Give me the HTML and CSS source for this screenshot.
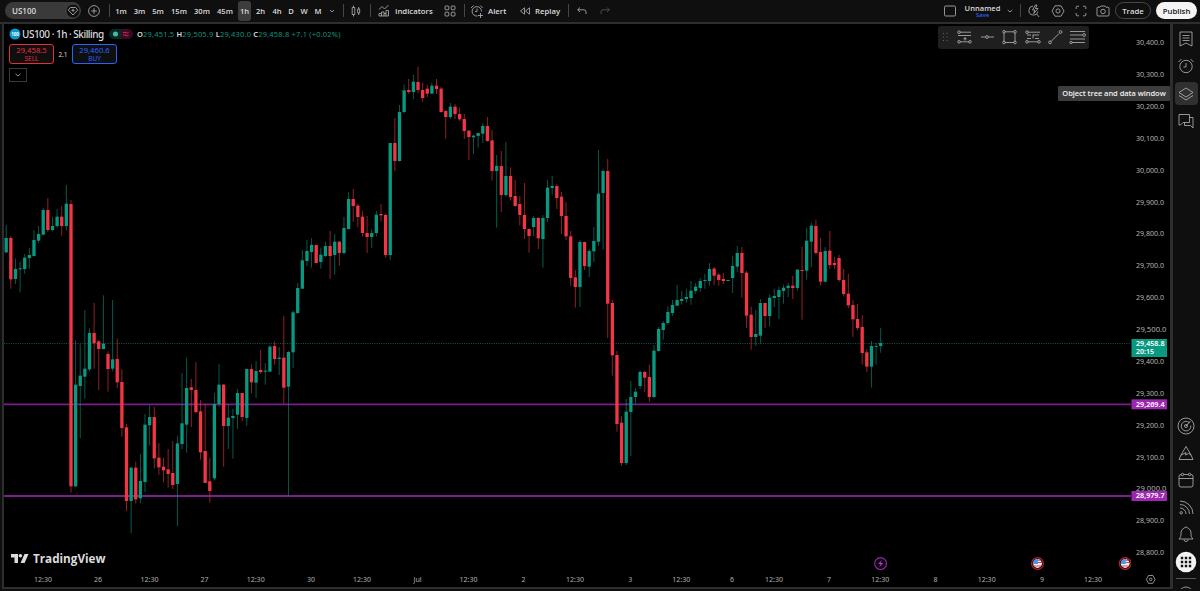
FILE: index.html
```html
<!DOCTYPE html>
<html lang="en">
<head>
<meta charset="utf-8">
<title>US100 chart</title>
<link rel="stylesheet" href="styles.css">
</head>
<body>
<header class="topbar">
  <div class="symbol"><span>US100</span><svg class="ic" width="16" height="16" viewBox="0 0 16 16"><circle cx="8" cy="8" r="7" fill="#111" stroke="#555" stroke-width=".6"/><path d="M5.3 4.5h5.4l2 2.6L8 12 3.3 7.100z"/><path d="M8 5.800v3M6.500 7.300h3"/></svg></div>
  <div class="cell w28"><svg class="ic" width="14" height="14" viewBox="0 0 14 14"><circle cx="7" cy="7" r="5.400"/><path d="M7 4.200v5.600M4.200 7h5.600"/></svg></div>
  <div class="cell w2"><i class="sep"></i></div>
  <div class="cell w22">1m</div><div class="cell w15">3m</div><div class="cell w22">5m</div><div class="cell w20">15m</div><div class="cell w26">30m</div><div class="cell w20">45m</div>
  <div class="cell w19"><b class="active">1h</b></div>
  <div class="cell w13">2h</div><div class="cell w20">4h</div><div class="cell w8">D</div><div class="cell w18">W</div><div class="cell w10">M</div>
  <div class="cell w18"><svg class="ic" width="8" height="6" viewBox="0 0 8 6"><path d="M2 2l2 2 2-2"/></svg></div>
  <div class="cell w4"><i class="sep"></i></div>
  <div class="cell w22"><svg class="ic" width="12" height="14" viewBox="0 0 12 14"><path d="M2.200 3.500h2.600v7H2.200zM3.500 1.500v2M3.500 10.500v2M7.700 5h2v4h-2zM8.700 3v2M8.700 9v2"/></svg></div>
  <div class="cell w6"><i class="sep"></i></div>
  <div class="cell w22"><svg class="ic" width="12" height="13" viewBox="0 0 12 13"><path d="M1 12V9.500h2.500V8h2.500v1.500H8V6.500h2.500V12zM3.500 9.500V12M6 9.500V12M8 9.500V12M1 5.500l3-3 2.500 2.500 4-4"/></svg></div>
  <div class="cell w42 left">Indicators</div>
  <div class="cell w25"><svg class="ic" width="12" height="12" viewBox="0 0 12 12"><rect x="1" y="1" width="3.800" height="3.800" rx=".8"/><rect x="7.200" y="1" width="3.800" height="3.800" rx=".8"/><rect x="1" y="7.200" width="3.800" height="3.800" rx=".8"/><rect x="7.200" y="7.200" width="3.800" height="3.800" rx=".8"/></svg></div>
  <div class="cell w4"><i class="sep"></i></div>
  <div class="cell w22"><svg class="ic" width="14" height="14" viewBox="0 0 14 14"><path d="M11.500 7.500A4.700 4.700 0 1 0 7.500 12M7 4.500v3H5M1 4l2.500-2.500M10.200 1.500L12.700 4M10.500 9v5M8 11.500h5"/></svg></div>
  <div class="cell w28 left">Alert</div>
  <div class="cell w18"><svg class="ic" width="12" height="10" viewBox="0 0 12 10"><path d="M5.500 1.800v6.400L1.500 5zM10.500 1.800v6.400L6.500 5z"/></svg></div>
  <div class="cell w32 left replay">Replay</div>
  <div class="cell w4"><i class="sep"></i></div>
  <div class="cell w24"><svg class="ic" width="12" height="10" viewBox="0 0 12 10"><path d="M4 1.500L1.700 3.800 4 6M1.700 3.800H8a2 2 0 0 1 2 2V8"/></svg></div>
  <div class="cell w22"><svg class="ic dim" width="12" height="10" viewBox="0 0 12 10"><path d="M8 1.500l2.300 2.300L8 6M10.300 3.800H4a2 2 0 0 0-2 2V8"/></svg></div>

  <div class="cell w20 push"><svg class="ic" width="14" height="14" viewBox="0 0 14 14"><rect x="1.500" y="2" width="11" height="10" rx="1.200"/></svg></div>
  <div class="cell w44 layout"><span>Unnamed</span><small>Save</small></div>
  <div class="cell w12"><svg class="ic" width="8" height="6" viewBox="0 0 8 6"><path d="M1.700 2L4 4l2.300-2"/></svg></div>
  <div class="cell w8"><i class="sep"></i></div>
  <div class="cell w20"><svg class="ic" width="14" height="14" viewBox="0 0 14 14"><path d="M6 2a4.500 4.500 0 1 0 4.800 5.500M9.500 10l2.700 3M8.500 1L5.500 6h2.200L6.800 9.500 11 4.500H8.500L10 1z"/></svg></div>
  <div class="cell w27"><svg class="ic" width="14" height="14" viewBox="0 0 14 14"><path d="M4 1.800h6L13 7l-3 5.200H4L1 7z"/><circle cx="7" cy="7" r="2.100"/></svg></div>
  <div class="cell w20"><svg class="ic" width="12" height="12" viewBox="0 0 12 12"><path d="M1.200 4V2.200a1 1 0 0 1 1-1H4M8 1.200h1.800a1 1 0 0 1 1 1V4M10.800 8v1.800a1 1 0 0 1-1 1H8M4 10.800H2.200a1 1 0 0 1-1-1V8"/></svg></div>
  <div class="cell w24"><svg class="ic" width="14" height="12" viewBox="0 0 14 12"><path d="M1 3.200a1 1 0 0 1 1-1h2L5 1h4l1 1.200h2a1 1 0 0 1 1 1V10a1 1 0 0 1-1 1H2a1 1 0 0 1-1-1z"/><circle cx="7" cy="6.500" r="2.300"/></svg></div>
  <div class="pill trade">Trade</div>
  <div class="pill publish">Publish</div>
</header>
<main class="workspace">
  <section class="chart">
    <svg class="plot" id="plot" width="1166" height="563" viewBox="4 24 1166 563"></svg>
    <div class="legend">
      <div class="title"><svg width="12" height="12" viewBox="0 0 12 12"><circle cx="6" cy="6" r="5.500" fill="#0899cc"/><text x="6" y="8" class="badge">100</text></svg><span class="name">US100 · 1h · Skilling</span>
        <svg class="state" width="24" height="10" viewBox="0 0 24 10"><path d="M5 0h7v10H5A5 5 0 0 1 5 0z" fill="#062b26"/><path d="M12 0h7a5 5 0 0 1 0 10h-7z" fill="#3a0b20"/><circle cx="6.500" cy="5" r="2.500" fill="#42bda8"/><path d="M14 3.700q1.500-1 3 0t2.500 0M14 6.300q1.500-1 3 0t2.500 0" fill="none" stroke="#d02e68"/></svg>
        <span class="ohlc"><b>O</b>29,451.5 <b>H</b>29,505.9 <b>L</b>29,430.0 <b>C</b>29,458.8 +7.1 (+0.02%)</span></div>
      <div class="quotes"><div class="quote sell"><span>29,458.5</span><small>SELL</small></div><span class="spread">2.1</span><div class="quote buy"><span>29,460.6</span><small>BUY</small></div></div>
      <div class="fold"><svg class="ic" width="8" height="6" viewBox="0 0 8 6"><path d="M1.500 1.800L4 4l2.500-2.200"/></svg></div>
    </div>
    <div class="tools"><svg class="ic" width="151" height="22" viewBox="0 0 151 22">
      <path d="M5.500 7v9M9 7v9" stroke-dasharray="1 2.500" stroke="#777"/>
      <path d="M22 6.200h11M20 9.500h13M22 15.800h9M27 11v3.500M25.500 12.800h3"/><circle cx="21" cy="6.200" r="1.300"/><circle cx="21" cy="15.800" r="1.300"/><circle cx="32" cy="15.800" r="1.300"/>
      <path d="M43 11h4.500M50.500 11H56"/><circle cx="49" cy="11" r="1.400"/>
      <path d="M66 7v9M77 7v9M67 5.800h9M67 16.500h9"/><circle cx="66" cy="5.800" r="1.300"/><circle cx="77" cy="5.800" r="1.300"/><circle cx="66" cy="16.500" r="1.300"/><circle cx="77" cy="16.500" r="1.300"/>
      <path d="M90 6.200h12M89 9h4M97 12.500h4M89 12.500h4M90 15.800h10M95 8.500v4M95 9h6"/><circle cx="89" cy="6.200" r="1.300"/><circle cx="89" cy="15.800" r="1.300"/><circle cx="101" cy="15.800" r="1.300"/>
      <path d="M113 15.500l8-8"/><circle cx="112" cy="16.300" r="1.400"/><circle cx="122.500" cy="6" r="1.400"/>
      <path d="M132 5.500h15M132 9h12M132 13h15M134 16.500h13"/><circle cx="146" cy="9" r="1.400"/><circle cx="133" cy="16.500" r="1.200"/>
    </svg></div>
    <div class="tip">Object tree and data window</div>
  </section>
  <nav class="side">
    <div class="slot"><svg class="ic" width="18" height="18" viewBox="0 0 18 18"><path d="M3 2h12v14l-6-3-6 3zM5.500 5.500h7M5.500 8h7M5.500 10.500h7"/></svg></div>
    <div class="slot"><svg class="ic" width="18" height="18" viewBox="0 0 18 18"><circle cx="9" cy="9.500" r="6.200"/><path d="M9 6v4H6.500M1.500 5l3-3M13.500 2l3 3"/></svg></div>
    <div class="slot on"><svg class="ic" width="18" height="18" viewBox="0 0 18 18"><path d="M9 3l7 4.500L9 12 2 7.500zM2 10.500L9 15l7-4.500"/></svg></div>
    <div class="slot"><svg class="ic" width="18" height="18" viewBox="0 0 18 18"><path d="M2 2.500h10.500v8H6L3.500 13H2zM12.500 5.500H16V16l-2.500-2.500H7.500v-3"/></svg></div>
    <div class="slot lower"><svg class="ic" width="20" height="20" viewBox="0 0 20 20"><circle cx="10" cy="10" r="8"/><path d="M13.500 6.800A4.800 4.800 0 1 0 14.800 9.500M10 10l4.500-5"/><circle cx="10" cy="10" r="1.500"/></svg></div>
    <div class="slot"><svg class="ic" width="18" height="18" viewBox="0 0 18 18"><path d="M9 2.500L5.500 8.500 4 11l5-2.500-.5 2.500 3-1.500L14 11 9 2.500M4 11l-2 4.500h14L14 11M2 15.500"/></svg></div>
    <div class="slot"><svg class="ic" width="18" height="18" viewBox="0 0 18 18"><rect x="2" y="3.500" width="14" height="12.500" rx="2"/><path d="M2 7.500h14"/><circle cx="5.500" cy="3.500" r="1.200" fill="#0f0f0f"/><circle cx="12.500" cy="3.500" r="1.200" fill="#0f0f0f"/></svg></div>
    <div class="slot"><svg class="ic" width="18" height="18" viewBox="0 0 18 18"><path d="M3 3a13 13 0 0 1 13 13M3 6.500A9.500 9.500 0 0 1 12.500 16M3 10a6 6 0 0 1 6 6"/><circle cx="4.200" cy="14.800" r="1.200"/></svg></div>
    <div class="slot"><svg class="ic" width="18" height="18" viewBox="0 0 18 18"><path d="M2 14c2-2 2-3 2-6 0-3 2-4.500 3.500-5a1.600 1.600 0 0 1 3 0C12 3.500 14 5 14 8c0 3 0 4 2 6zM7 14.500a2 2 0 0 0 4 0"/></svg></div>
    <div class="slot apps"><svg width="22" height="22" viewBox="0 0 22 22"><circle cx="11" cy="11" r="10.300" fill="#f4f4f4"/><path fill="#111" d="M5.800 5.800h2.400v2.400H5.800zM9.800 5.800h2.400v2.400H9.800zM13.800 5.800h2.400v2.400h-2.400zM5.800 9.800h2.400v2.400H5.800zM9.800 9.800h2.400v2.400H9.800zM13.800 9.800h2.400v2.400h-2.400zM5.800 13.800h2.400v2.400H5.800zM9.800 13.800h2.400v2.400H9.800zM13.800 13.800h2.400v2.400h-2.400z"/></svg></div>
    <i class="rule"></i>
    <svg class="ic help" width="18" height="18" viewBox="0 0 18 18"><circle cx="9" cy="9" r="7"/><circle cx="9" cy="9" r="3.500"/></svg>
  </nav>
</main>
<script src="chart.js"></script>
</body>
</html>
```
FILE: styles.css
```css
* { box-sizing: border-box; }
body { margin: 0; width: 1200px; height: 591px; overflow: hidden; background: #0f0f0f; color: #dbdbdb; font-family: "Noto Sans", "Open Sans", sans-serif; font-size: 7.6px; display: flex; flex-direction: column; }
.ic { fill: none; stroke: #b8b8b8; stroke-width: .8; flex: none; }
.ic.dim { stroke: #5a5a5a; }
.topbar { height: 22px; padding: 0 3px 1px 5px; display: flex; align-items: center; flex: none; font-family: "Open Sans", "Noto Sans", sans-serif; font-weight: 600; white-space: nowrap; }
.symbol { width: 76px; height: 17px; border-radius: 9px; background: #3a3a3a; display: flex; align-items: center; justify-content: space-between; padding: 0 0 0 7px; margin-right: -1px; flex: none; font-size: 8px; }
.cell { display: flex; align-items: center; justify-content: center; flex: none; height: 21px; }
.cell.left { justify-content: flex-start; font-size: 7.8px; }
.cell.replay { padding-left: 1px; }
.sep { width: 1px; height: 13px; background: #464646; flex: none; }
.active { font-weight: 600; width: 13px; height: 20px; background: #3d3d3d; border-radius: 3px; display: flex; align-items: center; justify-content: center; flex: none; }
.w2 { width: 2px; } .w4 { width: 4px; } .w6 { width: 6px; } .w8 { width: 8px; } .w10 { width: 10px; } .w12 { width: 12px; } .w13 { width: 13px; } .w15 { width: 15px; } .w18 { width: 18px; } .w19 { width: 19px; } .w20 { width: 20px; } .w22 { width: 22px; } .w24 { width: 24px; } .w25 { width: 25px; } .w26 { width: 26px; } .w27 { width: 27px; } .w28 { width: 28px; } .w32 { width: 32px; } .w42 { width: 42px; } .w44 { width: 44px; }
.push { margin-left: auto; }
.layout { flex-direction: column; line-height: 8px; font-size: 7.5px; padding-left: 1px; }
.layout span { letter-spacing: .05px; }
.layout small { font-size: 6px; line-height: 6px; color: #2962ff; }
.pill { height: 17px; border-radius: 9px; display: flex; align-items: center; justify-content: center; flex: none; font-size: 7.8px; }
.trade { width: 36px; border: 1px solid #484848; margin-right: 5px; }
.publish { width: 41px; background: #f4f4f4; color: #111; }
.workspace { height: 567px; border-top: 2px solid #2e2e2e; display: flex; flex: none; }
.chart { position: relative; width: 1171px; height: 565px; border: solid #2e2e2e; border-width: 0 3px 2px 2px; margin-left: 2px; background: #000; flex: none; }
.plot { display: block; }
.plot text { font-size: 7.3px; fill: #b2b2b2; }
.plot .date { text-anchor: middle; font-size: 7px; }
.plot .tag { fill: #fff; font-weight: 600; }
.plot .brand { font: 700 12px "Open Sans", sans-serif; fill: #dcdcdc; }
.legend { position: absolute; left: 5px; top: 4px; display: flex; flex-direction: column; white-space: nowrap; }
.title { display: flex; align-items: center; height: 12px; }
.badge { font: bold 4.5px "Open Sans", sans-serif; fill: #fff; text-anchor: middle; }
.name { font-size: 10px; width: 82px; margin-left: 1px; letter-spacing: -.5px; font-weight: 500; }
.state { margin-left: 5px; }
.ohlc { margin-left: 4px; color: #0d9580; font-size: 7.5px; letter-spacing: .18px; }
.ohlc b { color: #dbdbdb; font-weight: 600; }
.quotes { display: flex; align-items: center; margin-top: 4px; height: 20px; }
.quote { width: 45px; height: 20px; border: 1px solid; border-radius: 3px; background: #0f0f0f; display: flex; flex-direction: column; align-items: center; justify-content: center; font-size: 7.700px; line-height: 9px; }
.quote small { font-size: 6.5px; line-height: 7px; }
.sell { color: #e32f3d; } .buy { color: #2962ff; }
.spread { width: 18px; text-align: center; font-size: 6.5px; }
.fold { width: 18px; height: 14px; border: 1px solid #3a3a3a; margin-top: 4px; display: flex; align-items: center; justify-content: center; }
.tools { position: absolute; left: 934px; top: 2px; width: 151px; height: 23px; background: #1f1f1f; border-radius: 3px; }
.tip { position: absolute; right: 0; top: 62px; width: 112px; height: 15px; line-height: 14px; background: #3d3d3d; color: #f0f0f0; text-align: center; white-space: nowrap; font-family: "Open Sans", sans-serif; font-weight: 600; font-size: 7.5px; letter-spacing: -.05px; border-radius: 1px; }
.side { width: 26px; display: flex; flex-direction: column; align-items: center; padding-top: 1px; overflow: hidden; }
.slot { width: 23px; height: 27px; display: flex; align-items: center; justify-content: center; flex: none; }
.slot.on { background: #303030; border-radius: 4px; height: 23px; margin: 3px 0 2px; }
.lower { margin-top: 278px; }
.apps { margin-top: 1px; }
.rule { width: 20px; height: 1px; background: #555; margin-top: 3px; flex: none; }
.help { margin-top: 6px; }
```
FILE: chart.js
```js
// Each block: vertical origin, then candles as direction, high, body top, body bottom, low
// in thirds of a pixel below that origin.
const blocks = [
[170, `G165,204,247,250 R198,204,328,356 G265,297,327,342 G274,295,298,367 G252,263,297,311 G233,255,264,296 G180,210,258,260 G168,192,212,220 G113,120,194,196 R84,120,180,186 G141,168,180,184 G117,140,168,174 R108,140,168,197 G45,101,168,182 R90,102,949,968 G511,644,949,951 G523,617,648,805 G420,596,620,686 G475,489,598,604 R399,489,520,596 R510,514,537,660 G376,521,537,538 R544,552,597,665 G390,568,596,604 R506,567,637,654 R598,636,774,800 R761,772,993,1023 G890,893,993,1090 R875,893,988,1001 G852,933,985,1000 G732,764,936,967 G706,741,766,827 R711,741,865,895 R819,863,892,914 R863,890,901,938 R837,898,912,953 R813,909,945,957 G797,820,942,1068 G609,760,822,837 G563,654,764,848 R627,652,660,771 R576,660,726,730 R690,724,847,869 R702,843,939,939 R863,934,963,998 G669,702,925,930 G583,644,702,710 R642,644,768,890 G702,743,768,837 G716,738,744,866 G657,669,734,777 R669,669,741,754 G595,597,744,768 R583,597,637,670 G573,603,638,684 R540,600,606,612 G579,602,605,644 G525,530,605,606 R514,528,567,584 G531,563,567,615 R438,563,653,701 G543,546,650,978 G420,427,547,594 G339,354,429,432 G240,271,356,357 G210,243,273,288 G204,225,246,293 R224,225,279,280 G233,254,276,296 G215,228,258,261 R183,228,258,327 G192,215,255,314 R213,215,249,287 G141,174,249,254 G66,87,177,178 R57,87,108,155 R101,107,141,172 R123,140,189,200 R138,189,201,249 G178,189,201,234 G123,134,189,200 R102,132,136,155 R130,135,255,263`],
[60, `G249,249,585,600 R174,249,303,333 G135,156,303,305 G74,91,156,160 R57,90,96,102 G44,65,96,117 R20,66,90,99 R68,90,114,125 R74,86,101,111 G68,77,101,102 R57,77,87,102 R80,86,156,158 R150,153,171,236 G129,140,171,177 R132,140,162,177 R143,162,178,183 R161,177,213,237 R210,212,231,300 G225,227,232,282 G218,219,228,263 G190,198,221,249 R171,198,243,245 R210,241,333,362 G285,318,333,503 R273,318,405,456 G246,348,405,410 R322,348,411,422 R360,408,438,441 R408,432,465,497 R369,465,507,537 R506,507,528,578 G468,474,501,528 R471,474,535,567 G465,474,537,623 G360,383,474,486 G348,378,384,404 R373,378,414,447 R396,410,468,522 R426,468,529,540`],
[140, `R273,289,414,437 R390,412,441,503 G300,306,441,501 R305,306,378,390 G327,333,380,412 G261,303,334,366 G30,161,305,318 G86,93,159,329 R57,93,491,594 R480,489,646,707 R633,645,852,875 R828,848,969,977 G777,815,969,975 G723,771,816,948 G744,755,771,791 G690,696,738,748 R692,696,713,756 R674,711,771,785 G615,632,771,774 G561,567,633,634 G543,549,570,599 G499,516,549,554 G480,495,519,527 G435,480,497,498 G453,477,483,494 G446,471,477,489 G423,452,474,494 G429,440,453,461 G414,423,444,456 G402,420,423,446 G369,387,423,437 R381,386,407,435 R399,404,420,437 R399,417,423,432 G420,420,423,423`],
[200, `G167,198,234,279 G138,159,200,216 R141,159,219,293 R213,218,347,384 R320,344,411,449 G330,402,411,438 G297,309,407,431 R308,309,348,384 G283,293,348,380 G266,288,294,321 G261,270,291,357 G254,263,273,311 G249,257,264,291 R228,257,264,297 G207,209,264,272 R141,210,213,359 G83,122,212,239 G68,77,125,201 R59,78,159,164 R113,156,245,257 G141,153,245,246 R93,152,195,207 R170,189,195,208 R165,174,240,246 R207,240,282,290 R222,281,316,324 R299,315,358,411 R312,357,384,390 R345,381,459,494 R447,457,500,516 G423,438,500,563 G429,438,440,494 G384,429,438,458`]
];
const color = { G: '#089981', R: '#f23645' };
const text = (x, y, s, cls = '', len = 0) =>
  `<text x="${x}" y="${y}" class="${cls}"${len ? ` textLength="${len}" lengthAdjust="spacingAndGlyphs"` : ''}>${s}</text>`;
let out = '';

// Price levels
for (const y of [404.300, 496]) out += `<path d="M4 ${y}H1131" stroke="#7b1d8c" stroke-width="1.800"/>`;
out += '<path d="M4 343.500H1131" stroke="#08735f" stroke-width=".8" stroke-dasharray="1 1.300"/>';

// Candles
let i = 0;
for (const [top, rows] of blocks) {
  for (const row of rows.split(' ')) {
    const c = color[row[0]];
    const [h, a, b, l] = row.slice(1).split(',').map(v => top + v / 3);
    const x = 6.2 + 4.627 * i++;
    out += `<path d="M${x} ${h}V${l}" stroke="${c}" stroke-width=".8" opacity=".75"/>` +
      `<rect x="${x - 1.650}" y="${a}" width="3.300" height="${Math.max(b - a, .8)}" fill="${c}"/>`;
  }
}

// Price scale
for (let k = 0; k <= 16; k++) {
  const p = (30400 - k * 100).toLocaleString('en-US') + '.0';
  out += text(1136, 45.200 + k * 31.870, p, '', k === 9 || k === 14 ? 30.500 : 28);
}
out += '<rect x="1131.500" y="339" width="35.500" height="18" fill="#089981"/>' +
  text(1136, 346.300, '29,458.8', 'tag', 28.500) + text(1136, 354.300, '20:15', 'tag', 18);
for (const [y, s] of [[399.300, '29,269.4'], [491, '28,979.7']])
  out += `<rect x="1131.500" y="${y}" width="35.500" height="10" fill="#9c27b0"/>` + text(1136, y + 7.400, s, 'tag', 28.500);

// Time scale
const dates = { 43: '12:30', 98: '26', 149.5: '12:30', 204.5: '27', 255.7: '12:30', 311: '30', 362: '12:30', 417.5: 'Jul', 468.5: '12:30', 523.5: '2', 575: '12:30', 630.3: '3', 681.3: '12:30', 732: '6', 774: '12:30', 829: '7', 880.3: '12:30', 935.5: '8', 986.7: '12:30', 1042: '9', 1093: '12:30' };
for (const x in dates) out += text(x, 581.500, dates[x], 'date', dates[x].length === 5 ? 18 : 0);
out += '<g fill="none" stroke="#b2b2b2" stroke-width=".8"><path d="M1148.500 575.500h4.400l2.200 3.900-2.200 3.900h-4.400l-2.200-3.900z"/><circle cx="1150.700" cy="579.400" r="1.300"/></g>';

// Event markers
out += '<circle cx="880.600" cy="563.600" r="5.900" fill="#0d020f" stroke="#8e2aa0" stroke-width="1.200"/><path d="M882 560l-4 4h2.500l-1.300 3.300 4-4.200h-2.500z" fill="#b23cc8"/>';
out += '<clipPath id="edge"><path d="M4 24h1127v563H4z"/></clipPath><g clip-path="url(#edge)">';
for (const x of [1037.5, 1125.2])
  out += `<circle cx="${x}" cy="563.500" r="5.900" fill="#19080a" stroke="#b5232f" stroke-width="1.200"/><circle cx="${x}" cy="563.500" r="4.400" fill="#f0f0f0"/><path d="M${x} 562.500h4.300M${x - 3.5} 566h7M${x} 560.300h3" stroke="#e04450" stroke-width="1"/><path d="M${x + .5} 559.100a4.400 4.400 0 0 0-4.900 4.900h4.900z" fill="#3f9bea"/>`;
out += '</g>';

// Brand mark
out += '<g fill="#dcdcdc"><path d="M11 554h7v9h-3.500v-5.500H11z"/><circle cx="20.400" cy="555.800" r="1.800"/><path d="M24.500 554h4l-3.900 9h-4z"/></g>' + text(33, 563, 'TradingView', 'brand', 72.500);
document.getElementById('plot').innerHTML = out;
```
